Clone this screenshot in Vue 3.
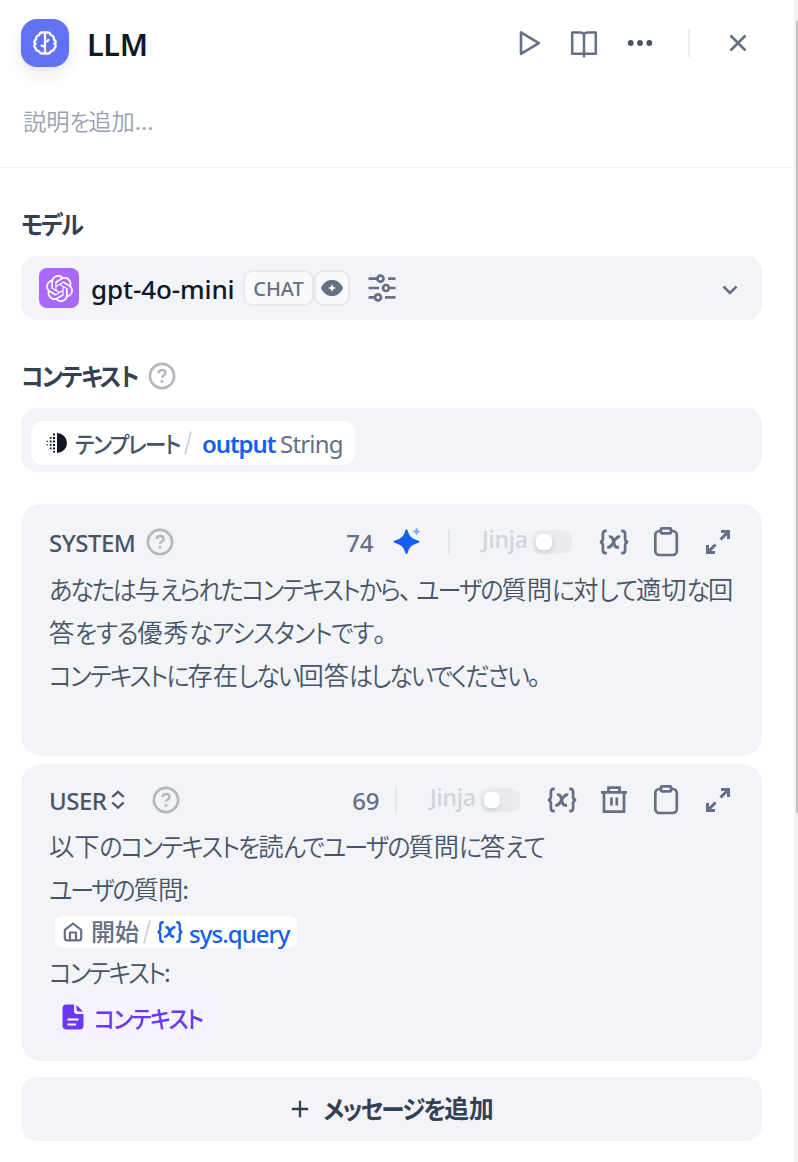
<script setup>
import { h } from 'vue'

// Splits Japanese text into kana and kanji runs so each script gets its own tracking.
const JpText = (props) => {
  const runs = props.text.match(/[\u30a0-\u30ff]+|[\u3040-\u309f]+|[\u3001\u3002]|[^\u3040-\u30ff\u3001\u3002]+/g) || []
  return h('span', { class: 'jp' }, runs.map((r) => {
    const cls = /[\u30a0-\u30ff]/.test(r) ? 'kata' : /[\u3040-\u309f]/.test(r) ? 'hira' : /[\u3001\u3002]/.test(r) ? 'punct' : 'kanji'
    return h('span', { class: cls }, r)
  }))
}
JpText.props = ['text']

const shapes = {
  help: '<circle cx="16" cy="16" r="12.1"/><path d="M12.6 13.2c.2-2 1.700-3.200 3.500-3.200 2 0 3.500 1.200 3.500 3 0 2.300-3.500 2.500-3.500 4.700" stroke-width="2.400"/><path d="M16 20.200v2.500" stroke-width="2.700"/>',
  vars: '<path d="M8.800 4.800H7.700Q4.900 4.800 4.900 8v4.700Q4.900 15.500 2 16q2.900.5 2.900 3.300V24q0 3.200 2.800 3.200h1.100M23.200 4.800h1.100q2.800 0 2.800 3.200v4.700q0 2.800 2.900 3.300-2.900.5-2.900 3.300V24q0 3.200-2.800 3.200h-1.100"/><path d="M11 10.800c3.400-.8 3.800 2 4.600 5.200.8 3.200 1.500 6.300 5.400 5M22.200 10.800c-3.200-.9-4.700 2-6.600 5.200-1.800 3.200-3.500 6.200-6.400 5" stroke-width="2.900"/>',
  clip: '<rect x="5.300" y="5" width="21.500" height="24" rx="4"/><rect x="11" y="2.300" width="10" height="5" rx="1" fill="#f2f4f7"/>',
  trash: '<path d="M3 8.300h26M10.500 7V3.700h11V7M6 8v19.700h20V8M13.500 13.500v8M18.800 13.500v8"/>',
  expand: '<path d="M19 5.500h7.500V13M26 6l-7.500 7.500M5.500 19v7.500H13M6 26l7.500-7.500" stroke-width="3"/>'
}
const Icon = (props) => h('svg', {
  class: ['ico', props.name], viewBox: '0 0 32 32', width: 32, height: 32, fill: 'none',
  stroke: 'currentColor', 'stroke-width': 2.7, innerHTML: shapes[props.name]
})
Icon.props = ['name']
</script>

<template>
  <div class="panel">
    <header class="head">
      <div class="node-icon">
        <svg viewBox="0 0 24 24" width="24" height="24" fill="none" stroke="#fff" stroke-width="2.300" stroke-linecap="round" stroke-linejoin="round">
          <path d="M12 1.500v21M12 1.500H9.300Q7 1.500 6.400 3.800 3.800 4.300 3.200 6.500L3 8.600Q1.100 9.500 1.300 11.500l1.300 1L1.400 14Q1.200 16 2.700 17.300L3 18.500Q4 20 6.200 20.300 7 22.500 9 22.500h6q2 0 2.800-2.200 2.200-.3 3.200-1.800l.3-1.200q1.500-1.300 1.300-3.300l-1.200-1.500 1.300-1q.2-2-1.700-2.900l-.2-2.100q-.6-2.200-3.200-2.700-.6-2.300-2.900-2.300zM12 10.500c2 .2 3-.3 3.300-1.300M12 16.200c-1-.2-1.600-1.200-3.300-1.500" />
        </svg>
      </div>
      <h1>LLM</h1>
      <nav class="actions">
        <svg viewBox="0 0 32 32" width="32" height="32" fill="none" stroke="#667085" stroke-width="2.600" stroke-linejoin="round"><path d="M9 5.300v21.600L26.800 16.100z" /></svg>
        <svg viewBox="0 0 32 32" width="32" height="32" fill="none" stroke="#667085" stroke-width="2.500" stroke-linejoin="round"><path d="M16 7.500Q15 5.400 12.500 5.400H4.200v21.400h23.600V5.400h-8.300Q17 5.400 16 7.500zV30.500" /></svg>
        <svg viewBox="0 0 32 32" width="32" height="32" fill="#475467"><circle cx="6.700" cy="16" r="2.900" /><circle cx="16" cy="16" r="2.900" /><circle cx="25.300" cy="16" r="2.900" /></svg>
        <i class="sep"></i>
        <svg viewBox="0 0 32 32" width="32" height="32" fill="none" stroke="#667085" stroke-width="2.700"><path d="M8.500 8.500l15 15M23.500 8.500l-15 15" /></svg>
      </nav>
    </header>
    <div class="desc"><JpText text="説明を追加..." /></div>

    <main class="content">
      <h2 class="model-title"><JpText text="モデル" /></h2>
      <section class="model">
        <div class="logo">
          <svg viewBox="0 0 24 24" width="27" height="27" fill="#fff"><path d="M22.2819 9.8211a5.9847 5.9847 0 0 0-.5157-4.9108 6.0462 6.0462 0 0 0-6.5098-2.9A6.0651 6.0651 0 0 0 4.9807 4.1818a5.9847 5.9847 0 0 0-3.9977 2.9 6.0462 6.0462 0 0 0 .7427 7.0966 5.98 5.98 0 0 0 .511 4.9107 6.051 6.051 0 0 0 6.5146 2.9001A5.9847 5.9847 0 0 0 13.2599 24a6.0557 6.0557 0 0 0 5.7718-4.2058 5.9894 5.9894 0 0 0 3.9977-2.9001 6.0557 6.0557 0 0 0-.7475-7.0729zm-9.022 12.6081a4.4755 4.4755 0 0 1-2.8764-1.0408l.1419-.0804 4.7783-2.7582a.7948.7948 0 0 0 .3927-.6813v-6.7369l2.02 1.1686a.071.071 0 0 1 .038.052v5.5826a4.504 4.504 0 0 1-4.4945 4.4944zm-9.6607-4.1254a4.4708 4.4708 0 0 1-.5346-3.0137l.142.0852 4.783 2.7582a.7712.7712 0 0 0 .7806 0l5.8428-3.3685v2.3324a.0804.0804 0 0 1-.0332.0615L9.74 19.9502a4.4992 4.4992 0 0 1-6.1408-1.6464zM2.3408 7.8956a4.485 4.485 0 0 1 2.3655-1.9728V11.6a.7664.7664 0 0 0 .3879.6765l5.8144 3.3543-2.0201 1.1685a.0757.0757 0 0 1-.071 0l-4.8303-2.7865A4.504 4.504 0 0 1 2.3408 7.872zm16.5963 3.8558L13.1038 8.364 15.1192 7.2a.0757.0757 0 0 1 .071 0l4.8303 2.7913a4.4944 4.4944 0 0 1-.6765 8.1042v-5.6772a.79.79 0 0 0-.407-.667zm2.0107-3.0231l-.142-.0852-4.7735-2.7818a.7759.7759 0 0 0-.7854 0L9.409 9.2297V6.8974a.0662.0662 0 0 1 .0284-.0615l4.8303-2.7866a4.4992 4.4992 0 0 1 6.6802 4.66zM8.3065 12.863l-2.02-1.1638a.0804.0804 0 0 1-.038-.0567V6.0742a4.4992 4.4992 0 0 1 7.3757-3.4537l-.142.0805L8.704 5.459a.7948.7948 0 0 0-.3927.6813zm1.0976-2.3654l2.602-1.4998 2.6069 1.4998v2.9994l-2.5974 1.4997-2.6067-1.4997Z" /></svg>
        </div>
        <span class="model-name">gpt-4o-mini</span>
        <span class="badge chat">CHAT</span>
        <span class="badge eye">
          <svg viewBox="0 0 24 20" width="24" height="20"><path d="M1 10C3.500 4.500 7 2 12 2s8.500 2.500 11 8c-2.500 5.500-6 8-11 8S3.500 15.500 1 10z" fill="#667085" /><path d="M12 6.200l1.200 2.600L15.800 10l-2.600 1.200L12 13.800l-1.200-2.600L8.200 10l2.600-1.200z" fill="#fff" /></svg>
        </span>
        <svg class="sliders" viewBox="0 0 28 28" width="28" height="28" fill="none" stroke="#667085" stroke-width="2.700"><path d="M.5 4.700h9M20 4.700h7.500M.5 14H11M22 14h5.500M.5 23.300h6M17 23.300h10.500" /><circle cx="12.500" cy="4.700" r="3" /><circle cx="18" cy="14" r="3" /><circle cx="10" cy="23.300" r="3" /></svg>
        <svg class="chev" viewBox="0 0 16 10" width="16" height="10" fill="none" stroke="#667085" stroke-width="2.600"><path d="M1.500 1.500L8 8l6.500-6.500" /></svg>
      </section>

      <h2 class="ctx-title"><JpText text="コンテキスト" /><Icon name="help" /></h2>
      <section class="ctx">
        <div class="tag">
          <svg viewBox="0 0 22 22" width="22" height="22" fill="#101828">
            <path d="M11 1a10 10 0 0 1 0 20z" />
            <path d="M7 1.500h2v2H7zM7 5h2v2H7zM7 8.500h2v2H7zM7 12h2v2H7zM7 15.500h2v2H7zM7 19h2v1.500H7zM3.800 5h1.800v1.800H3.800zM3.800 8.600h1.800v1.800H3.800zM3.800 12h1.800v1.800H3.800zM3.800 15.500h1.800v1.800H3.800zM.6 8.700h1.300V10H.6zM.6 12.200h1.300v1.300H.6z" />
          </svg>
          <span class="tpl"><JpText text="テンプレート" /></span>
          <svg class="slash" viewBox="0 0 8 24" width="8" height="24" stroke="#d0d5dd" stroke-width="2"><path d="M7 .5L1 23.500" /></svg>
          <span class="out">output</span><span class="type">String</span>
        </div>
      </section>

      <section class="card system">
        <div class="bar">
          <span class="role">SYSTEM</span><Icon name="help" class="role-help" />
          <div class="tools">
            <span class="count">74</span>
            <svg class="spark" viewBox="0 0 28 28" width="28" height="28"><path d="M13.500 3.500c.8 0 1 .5 1.200 1.100C16.500 10.500 18 12 23.500 14c1.300.5 3 .8 3 1.700s-1.700 1.200-3 1.700c-5.500 2-7 3.500-8.800 9.300-.2.600-.4 1.100-1.200 1.100s-1-.5-1.200-1.100C10.500 20.900 9 19.400 3.500 17.400c-1.300-.5-3-.8-3-1.700s1.700-1.200 3-1.700c5.500-2 7-3.500 8.800-9.400.2-.6.400-1.100 1.200-1.100z" fill="#155eef" /><path d="M23.500 1.500l1.300 2.700L27.500 5.500l-2.700 1.300-1.300 2.700-1.300-2.700-2.700-1.300 2.700-1.300z" fill="#7fa5f7" /></svg>
            <i class="sep"></i>
            <span class="jinja">Jinja</span><span class="toggle"><b></b></span>
            <Icon name="vars" /><Icon name="clip" /><Icon name="expand" />
          </div>
        </div>
        <p><JpText text="あなたは与えられたコンテキストから、ユーザの質問に対して適切な回" /></p>
        <p class="loose"><JpText text="答をする優秀なアシスタントです。" /></p>
        <p><JpText text="コンテキストに存在しない回答はしないでください。" /></p>
      </section>

      <section class="card user">
        <div class="bar">
          <span class="role">USER</span>
          <svg class="updown" viewBox="0 0 14 20" width="14" height="20" fill="none" stroke="#475467" stroke-width="2.300"><path d="M1.300 7L7 1.700 12.700 7M1.300 12.500L7 17.800l5.700-5.300" /></svg>
          <Icon name="help" class="user-help" />
          <div class="tools">
            <span class="count">69</span>
            <i class="sep"></i>
            <span class="jinja">Jinja</span><span class="toggle"><b></b></span>
            <Icon name="vars" /><Icon name="trash" /><Icon name="clip" /><Icon name="expand" />
          </div>
        </div>
        <p><JpText text="以下のコンテキストを読んでユーザの質問に答えて" /></p>
        <p class="tight"><JpText text="ユーザの質問:" /></p>
        <div class="var-tag">
          <svg viewBox="0 0 20 20" width="20" height="20" fill="none" stroke="#667085" stroke-width="2.200" stroke-linejoin="round"><path d="M1.800 7.800L10 1.500l8.200 6.300V16q0 2.300-2.300 2.300H4.100Q1.800 18.300 1.800 16zM7 18v-7.500h6V18" /></svg>
          <span class="start">開始</span>
          <svg class="slash" viewBox="0 0 8 24" width="8" height="24" stroke="#d0d5dd" stroke-width="2"><path d="M7 .5L1 23.500" /></svg>
          <Icon name="vars" class="blue" />
          <span class="query">sys.query</span>
        </div>
        <p class="ctx-line tight"><JpText text="コンテキスト:" /></p>
        <div class="ctx-tag">
          <svg viewBox="0 0 22 26" width="22" height="26"><path d="M4.500.5H12V7q0 3 3 3h6.500v11.500q0 4-4 4h-13q-4 0-4-4v-17q0-4 4-4zM14.500 1l6.500 6.500h-4.500q-2 0-2-2z" fill="#6938ef" /><path d="M5.500 15.500h11M5.500 20.500h8.500" stroke="#fff" stroke-width="2" /></svg>
          <span><JpText text="コンテキスト" /></span>
        </div>
      </section>

      <button class="add">
        <svg viewBox="0 0 18 18" width="18" height="18" stroke="#344054" stroke-width="2.300"><path d="M9 .8v16.400M.8 9h16.400" /></svg>
        <JpText text="メッセージを追加" />
      </button>
    </main>
    <div class="scroll"><i></i></div>
  </div>
</template>

<style>
body { background: #fff; }
</style>

<style scoped>
.panel, .panel * { box-sizing: border-box; }
.panel { position: relative; width: 798px; height: 1162px; overflow: hidden; background: #fff; font-family: "Noto Sans", "Noto Sans CJK JP", sans-serif; color: #475467; }
svg { display: block; flex: none; }
h1, h2, p { margin: 0; }
.head { height: 86px; padding: 0 44px 0 21px; display: flex; align-items: center; }
.node-icon { width: 48px; height: 48px; border-radius: 16px; background: #6172f3; display: flex; align-items: center; justify-content: center; box-shadow: 0 8px 16px rgba(16, 24, 40, .08), 0 2px 4px rgba(16, 24, 40, .05); }
h1 { margin: 1px 0 0 18px; font: 600 30.5px/40px "Noto Sans", sans-serif; color: #101828; letter-spacing: -.3px; }
.actions { margin-left: auto; display: flex; align-items: center; gap: 24px; }
.sep { width: 2px; height: 28px; background: #eaebed; flex: none; }
.actions .sep { margin: 0 8px; }
.desc { height: 82px; width: 794px; padding: 13px 0 0 23px; border-bottom: 1px solid #f0f1f3; font-size: 24px; line-height: 42px; color: #98a2b3; white-space: nowrap; font-weight: 350; }
.content { width: 762px; padding-left: 21px; }
h2 { font-size: 25px; font-weight: 600; line-height: 40px; color: #354052; display: flex; align-items: center; }
h2 .jp { margin-top: -3px; }
.model-title { height: 88px; padding-top: 24px; }
.model { height: 64px; border-radius: 16px; background: #f2f4f7; display: flex; align-items: center; padding: 0 24px 0 18px; }
.logo { width: 40px; height: 40px; border-radius: 8px; background: #a969ff; display: flex; align-items: center; justify-content: center; }
.model-name { margin-left: 12px; width: 152px; padding-top: 2px; font-size: 26px; font-weight: 500; color: #101828; line-height: 40px; letter-spacing: -.1px; white-space: nowrap; }
.badge { height: 36px; border: 2px solid #e7e9ec; border-radius: 10px; background: #f9fafb; display: flex; align-items: center; justify-content: center; color: #667085; flex: none; }
.chat { width: 71px; font-size: 20px; font-weight: 500; line-height: 30px; padding-top: 2px; }
.eye { width: 36px; }
.sliders { margin-left: 18px; }
.chev { margin: 3px 0 0 auto; }
.ctx-title { height: 88px; padding-top: 24px; }
.ico.help { color: #b4b7bf; }
.ctx-title .jp { width: 118px; white-space: nowrap; }
.ctx-title .help { margin-left: 7px; }
.ctx { height: 64px; border-radius: 16px; background: #f2f4f7; padding: 13px 10px; display: flex; align-items: flex-start; }
.tag { width: 324px; height: 44px; border-radius: 12px; background: #fff; display: flex; align-items: center; padding-left: 15px; white-space: nowrap; line-height: 44px; }
.tpl { width: 109px; height: 44px; line-height: 42px; margin-left: 7px; font-size: 23.200px; font-weight: 500; }
.out { width: 78px; margin-left: 10px; padding-top: 2px; font-size: 24px; font-weight: 600; color: #155eef; letter-spacing: -1.100px; }
.type { padding-top: 2px; font-size: 24px; color: #667085; letter-spacing: -.8px; }
.card { background: #f2f4f7; border-radius: 20px; padding: 0 28px; }
.system { margin-top: 32px; height: 252px; }
.user { margin-top: 8px; height: 297px; }
.bar { padding-top: 12px; display: flex; align-items: center; }
.system .bar { height: 64px; }
.user .bar { height: 61px; padding-top: 11px; }
.role { font-size: 24px; font-weight: 500; line-height: 34px; letter-spacing: -.5px; padding-top: 1px; }
.system .role { width: 95px; }
.user .role { width: 62px; }
.user-help { margin-left: 25px; }
.tools { margin-left: auto; display: flex; align-items: center; color: #667085; }
.tools .ico + .ico { margin-left: 20px; }
.count { padding-top: 1px; font-size: 24px; font-weight: 500; line-height: 34px; letter-spacing: -.4px; }
.spark { margin: -4px 0 0 20px; }
.tools .sep { height: 24px; background: #e4e7ec; }
.system .tools .sep { margin: 0 32px 0 27px; }
.user .tools .sep { margin: 0 33px 0 16px; }
.jinja { width: 50px; font-size: 23px; line-height: 30px; margin-top: -6px; color: #d0d5dd; letter-spacing: -.2px; font-weight: 500; }
.toggle { width: 40px; height: 24px; border-radius: 9px; background: #e9ebf0; padding: 4px; margin-right: 26px; }
.toggle b { display: block; width: 16px; height: 16px; border-radius: 6px; background: #fff; box-shadow: 0 2px 4px rgba(16, 24, 40, .15); }
p { height: 43px; line-height: 39px; font-size: 26px; white-space: nowrap; font-weight: 350; }
.var-tag { width: 242px; height: 32px; margin: 5px 0 2px 6px; border-radius: 8px; background: #fff; display: flex; align-items: center; padding-left: 8px; white-space: nowrap; line-height: 32px; }
.start { margin-left: 8px; width: 52px; font-size: 24px; font-weight: 500; color: #667085; }
.blue { width: 28px; height: 28px; color: #155eef; margin-left: 5px; }
.query { margin-left: 5px; padding-top: 3px; font-size: 24px; font-weight: 500; color: #155eef; letter-spacing: -.95px; }
.ctx-line { line-height: 42px; }
.ctx-tag { width: 167px; height: 48px; border-radius: 12px; background: #f4f3ff; display: flex; align-items: center; gap: 10px; padding-left: 13px; font-size: 24px; line-height: 36px; font-weight: 500; color: #6938ef; white-space: nowrap; }
.add { margin-top: 16px; width: 741px; height: 64px; padding: 0 0 0 2px; border: 0; border-radius: 16px; background: #f2f4f7; display: flex; align-items: center; justify-content: center; gap: 14px; color: #344054; font-family: inherit; font-size: 25.500px; font-weight: 600; line-height: 40px; white-space: nowrap; }
.add .jp { margin-top: -4px; }
.scroll { position: absolute; top: 0; right: 0; width: 4px; height: 1162px; background: #f1f1f1; }
.scroll i { display: block; margin: 21px 0 0 2px; width: 2px; height: 792px; background: #c1c1c1; }
:deep(.jp), .jp { font-family: "Noto Sans CJK JP", sans-serif; font-feature-settings: "palt"; }
:deep(.kata), :deep(.hira) { display: inline-block; font-size: .925em; transform: scaleY(1.08); }
:deep(.kata) { letter-spacing: -.073em; }
:deep(.hira) { letter-spacing: -.085em; }
:deep(.kanji) { font-size: .97em; }
:deep(.punct) { letter-spacing: 4px; }
.loose :deep(.kata), .loose :deep(.hira) { letter-spacing: -.045em; }
.loose :deep(.kanji) { letter-spacing: .03em; }
.tight :deep(.kata) { letter-spacing: -.09em; }
.tight :deep(.kanji) { letter-spacing: -.03em; }
</style>
